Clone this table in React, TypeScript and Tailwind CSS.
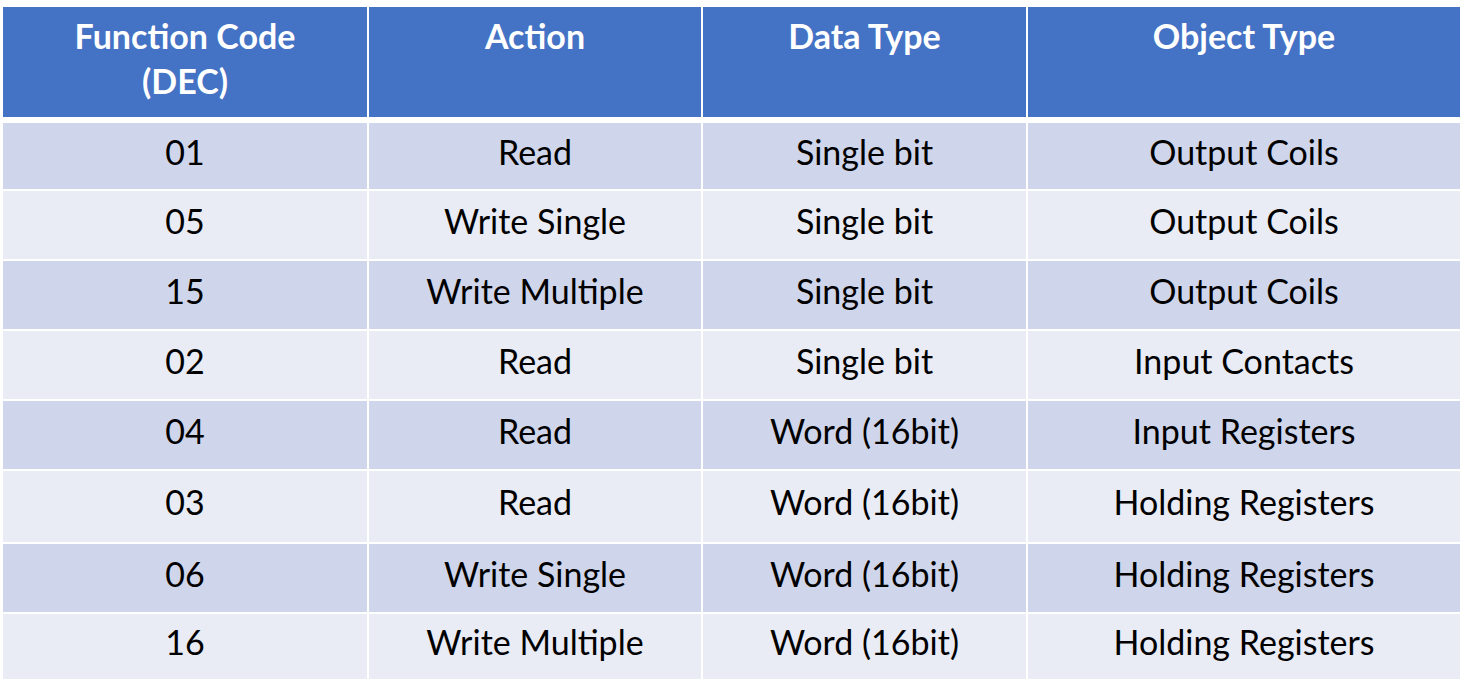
const headers = ['Function Code\n(DEC)', 'Action', 'Data Type', 'Object Type'];

const rows: { code: string; action: string; type: string; object: string; h: string }[] = [
  { code: '01', action: 'Read', type: 'Single bit', object: 'Output Coils', h: 'h-[66px]' },
  { code: '05', action: 'Write Single', type: 'Single bit', object: 'Output Coils', h: 'h-[68px]' },
  { code: '15', action: 'Write Multiple', type: 'Single bit', object: 'Output Coils', h: 'h-[68px]' },
  { code: '02', action: 'Read', type: 'Single bit', object: 'Input Contacts', h: 'h-[68px]' },
  { code: '04', action: 'Read', type: 'Word (16bit)', object: 'Input Registers', h: 'h-[68px]' },
  { code: '03', action: 'Read', type: 'Word (16bit)', object: 'Holding Registers', h: 'h-[71px]' },
  { code: '06', action: 'Write Single', type: 'Word (16bit)', object: 'Holding Registers', h: 'h-[68px]' },
  { code: '16', action: 'Write Multiple', type: 'Word (16bit)', object: 'Holding Registers', h: 'h-[65px]' },
];

const cols = 'grid grid-cols-[364px_332px_323px_432px] gap-x-[2px]';

export default function App() {
  return (
    <div className="h-[690px] w-[1467px] bg-white pl-[3px] pt-[7px] font-['Lato','Open_Sans',sans-serif] text-[34px] text-black">
      {/* 表头 */}
      <div className={`${cols} h-[110px]`}>
        {headers.map((t) => (
          <div
            key={t}
            className="whitespace-pre-line bg-[#4472C4] pt-[6px] text-center font-bold leading-[45px] text-white"
          >
            {t}
          </div>
        ))}
      </div>

      {/* 数据行：单双行交替底色 */}
      <div className="mt-[6px] flex flex-col gap-y-[2px]">
        {rows.map((r, i) => (
          <div key={i} className={`${cols} ${r.h}`}>
            {[r.code, r.action, r.type, r.object].map((c, j) => (
              <div
                key={j}
                className={`flex items-center justify-center pb-[9px] leading-none ${i % 2 === 0 ? 'bg-[#CFD5EA]' : 'bg-[#E9EBF5]'}`}
              >
                {c}
              </div>
            ))}
          </div>
        ))}
      </div>
    </div>
  );
}
